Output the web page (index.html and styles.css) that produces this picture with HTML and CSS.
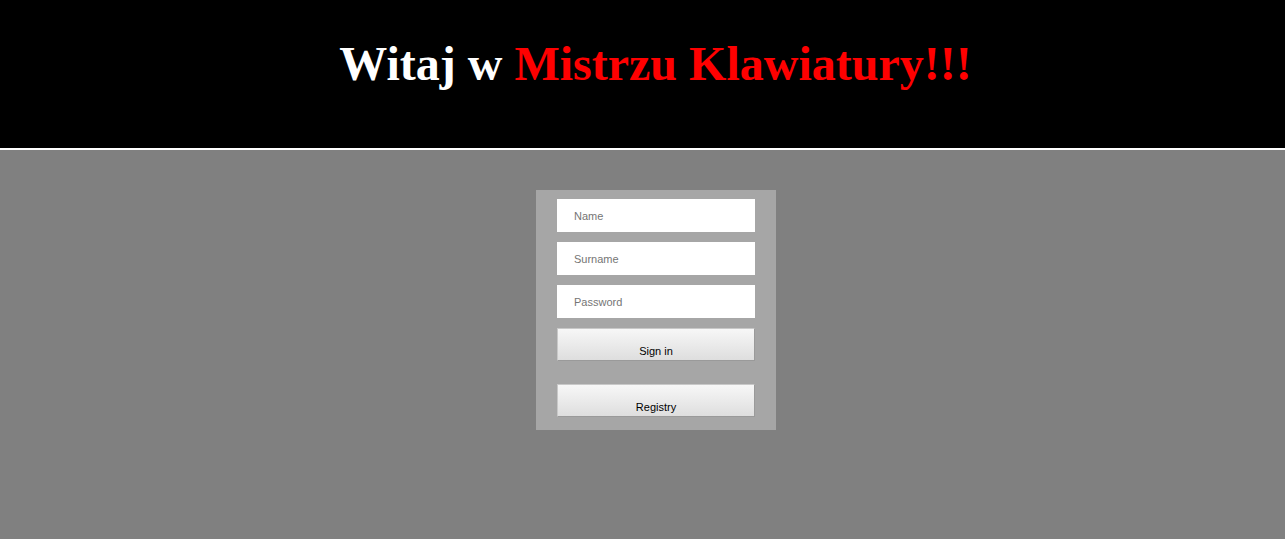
FILE: index.html
```html
<!DOCTYPE html>
<html lang="pl">
<head>
<meta charset="utf-8">
<title>Mistrz Klawiatury</title>
<link rel="stylesheet" href="styles.css">
</head>
<body>
<header class="header">
  <h1 class="title">Witaj w <span class="accent">Mistrzu Klawiatury!!!</span></h1>
</header>
<main class="main">
  <form class="panel">
    <input class="field" type="text" placeholder="Name">
    <input class="field" type="text" placeholder="Surname">
    <input class="field" type="password" placeholder="Password">
    <button class="btn" type="button">Sign in</button>
    <button class="btn btn-reg" type="button">Registry</button>
  </form>
</main>
</body>
</html>
```
FILE: styles.css
```css
html, body {
  margin: 0;
  padding: 0;
}
body {
  background: #808080;
  font-family: "Liberation Sans", Arial, sans-serif;
  height: 539px;
  overflow: hidden;
}
.header {
  background: #000;
  height: 150px;
  border-bottom: 2px solid #fff;
  box-sizing: border-box;
  padding-top: 36px;
}
.title {
  margin: 0;
  text-align: center;
  font-family: "Liberation Serif", "Times New Roman", serif;
  font-weight: bold;
  font-size: 48px;
  color: #fff;
  line-height: 55px;
  padding-left: 26px;
}
.accent {
  color: #ff0000;
}
.main {
  display: flex;
  justify-content: center;
  padding-top: 40px;
  padding-left: 27px;
}
.panel {
  width: 240px;
  box-sizing: border-box;
  background: #a6a6a6;
  padding: 9px 21px 13px;
  display: flex;
  flex-direction: column;
  gap: 10px;
}
.field {
  display: block;
  width: 198px;
  height: 33px;
  box-sizing: border-box;
  border: none;
  background: #fff;
  padding: 0 0 0 17px;
  margin: 0;
  font-family: "Liberation Sans", Arial, sans-serif;
  font-size: 11px;
  color: #333;
  outline: none;
}
.field::placeholder {
  color: #757575;
}
.btn {
  display: block;
  width: 198px;
  height: 33px;
  box-sizing: border-box;
  margin: 0;
  border: 1px solid #9a9a9a;
  border-top-color: #c8c8c8;
  border-left-color: #c8c8c8;
  background: linear-gradient(to bottom, #f7f7f7, #dedede);
  font-family: "Liberation Sans", Arial, sans-serif;
  font-size: 11px;
  color: #000;
  padding: 12px 0 0;
  text-align: center;
}
.btn-reg {
  margin-top: 13px;
}
```
